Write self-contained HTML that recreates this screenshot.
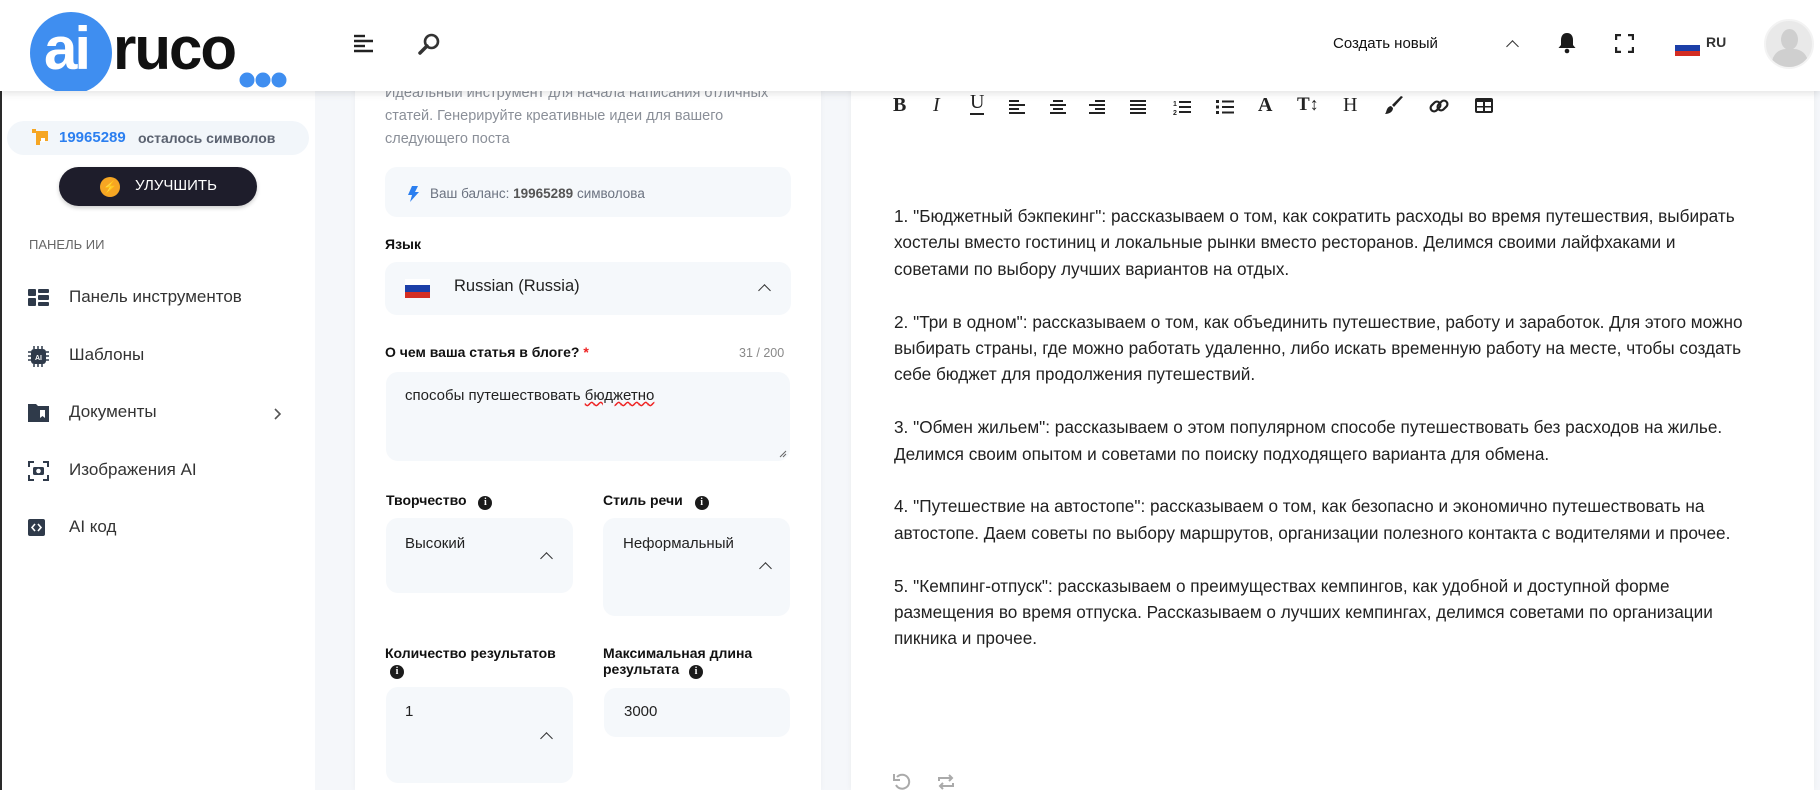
<!DOCTYPE html>
<html><head><meta charset="utf-8">
<style>
*{margin:0;padding:0;box-sizing:border-box}
body{width:1820px;height:790px;overflow:hidden;background:#f5f7fa;font-family:"Liberation Sans","Noto Sans CJK SC",sans-serif;color:#333;position:relative}
.abs{position:absolute}
.header{left:0;top:0;width:1820px;height:91px;background:#fff;box-shadow:0 2px 8px rgba(0,0,0,.12);z-index:5}
.sidebar{left:0;top:0;width:315px;height:790px;background:#fff;border-left:2px solid #2a2a2a}
.card{left:355px;top:0;width:466px;height:790px;background:#fff;box-shadow:0 0 6px rgba(0,0,0,.04)}
.right{left:851px;top:0;width:963px;height:790px;background:#fff;box-shadow:0 0 6px rgba(0,0,0,.05)}
.box{background:#f5f8fb;border-radius:12px}
.lbl{font-weight:bold;font-size:14px;color:#111}
.info{display:inline-block;width:14px;height:14px;border-radius:50%;background:#1b1b1b;color:#fff;font-size:10px;font-weight:bold;text-align:center;line-height:14px;font-family:"Liberation Serif",serif}
.chev{width:9px;height:9px;border-left:1.6px solid #333;border-top:1.6px solid #333;transform:rotate(45deg)}
.menu{font-size:17px;color:#333}
.txt p{font-size:17.2px;line-height:26.4px;color:#222;margin-bottom:26.4px;white-space:nowrap}
.tb{top:95px;width:22px;height:22px}
</style></head><body>

<div class="abs sidebar"></div>
<div class="abs card"></div>
<div class="abs right"></div>

<div class="abs header">
  <svg class="abs" style="left:0;top:0" width="300" height="91">
    <circle cx="71" cy="53" r="41" fill="#3f8ef0"/>
    <text x="44" y="69" font-family="Liberation Sans" font-weight="bold" font-size="60" fill="#fff" letter-spacing="-3">ai</text>
    <text x="113" y="69" font-family="Liberation Sans" font-weight="bold" font-size="60" fill="#111" letter-spacing="-2">ruco</text>
    <circle cx="247" cy="80" r="7.5" fill="#3f8ef0"/>
    <circle cx="263" cy="80" r="7.5" fill="#3f8ef0"/>
    <circle cx="279" cy="80" r="7.5" fill="#3f8ef0"/>
  </svg>
  <svg class="abs" style="left:354px;top:34px" width="20" height="19"><g stroke="#222" stroke-width="2.4"><line x1="0" y1="2" x2="11" y2="2"/><line x1="0" y1="7" x2="19" y2="7"/><line x1="0" y1="12" x2="11" y2="12"/><line x1="0" y1="17" x2="19" y2="17"/></g></svg>
  <svg class="abs" style="left:417px;top:32px" width="24" height="24"><circle cx="14.5" cy="9.5" r="6.5" fill="none" stroke="#333" stroke-width="2.6"/><line x1="10" y1="14" x2="3" y2="21" stroke="#333" stroke-width="3.5" stroke-linecap="round"/></svg>
  <div class="abs" style="left:1333px;top:35px;font-size:15px;color:#111">Создать новый</div>
  <div class="abs chev" style="left:1508px;top:42px"></div>
  <svg class="abs" style="left:1557px;top:32px" width="20" height="22"><path d="M10 1c-4 0-6 3-6 7v5l-2.5 3h17L16 13V8c0-4-2-7-6-7z" fill="#1b1b1b"/><circle cx="10" cy="19" r="2.3" fill="#1b1b1b"/></svg>
  <svg class="abs" style="left:1615px;top:34px" width="19" height="19"><g fill="none" stroke="#222" stroke-width="2.4"><path d="M1 6V1h5M13 1h5v5M18 13v5h-5M6 18H1v-5"/></g></svg>
  <div class="abs" style="left:1675px;top:40px;width:25px;height:16px">
    <div style="height:5px;background:#fff"></div><div style="height:5.5px;background:#1c3fa8"></div><div style="height:5.5px;background:#d42d22"></div>
  </div>
  <div class="abs" style="left:1706px;top:34px;font-size:14px;font-weight:bold;color:#333">RU</div>
  <div class="abs" style="left:1764px;top:19px;width:50px;height:50px;border-radius:50%;background:#e9e9e9;border:2px solid #f3f3f3;overflow:hidden">
    <div class="abs" style="left:15px;top:8px;width:17px;height:21px;border-radius:50%;background:#cfcfcf"></div>
    <div class="abs" style="left:6px;top:28px;width:36px;height:30px;border-radius:14px 14px 0 0;background:#cfcfcf"></div>
  </div>
</div>

<div class="abs box" style="left:7px;top:121px;width:302px;height:34px;border-radius:17px;background:#f2f6fa"></div>
<svg class="abs" style="left:32px;top:129px" width="18" height="18"><rect x="0" y="0" width="4" height="4" fill="#f6a623"/><path d="M4 2h12v10h-8v4H4z" fill="#f6a623"/><rect x="9" y="9" width="4" height="4" fill="#fff"/></svg>
<div class="abs" style="left:59px;top:129px;font-size:15px;font-weight:bold;color:#2b7ff0">19965289</div>
<div class="abs" style="left:138px;top:130px;font-size:14px;font-weight:bold;color:#5b6270">осталось символов</div>
<div class="abs" style="left:59px;top:167px;width:198px;height:39px;border-radius:20px;background:#1e1d2b;box-shadow:0 2px 4px rgba(0,0,0,.2)"></div>
<div class="abs" style="left:100px;top:177px;width:20px;height:20px;border-radius:50%;background:#f6a623;color:#1e1d2b;font-size:12px;text-align:center;line-height:20px">⚡</div>
<div class="abs" style="left:135px;top:177px;font-size:15px;color:#fff">УЛУЧШИТЬ</div>
<div class="abs" style="left:29px;top:237px;font-size:13px;color:#666">ПАНЕЛЬ ИИ</div>

<svg class="abs" style="left:28px;top:289px" width="21" height="17"><g fill="#2f3a4a"><rect x="0" y="0" width="8" height="7" rx="1"/><rect x="0" y="9" width="8" height="8" rx="1"/><rect x="10" y="0" width="11" height="4" rx="1"/><rect x="10" y="6" width="11" height="5" rx="1"/><rect x="10" y="13" width="11" height="4" rx="1"/></g></svg>
<div class="abs menu" style="left:69px;top:287px">Панель инструментов</div>
<svg class="abs" style="left:28px;top:346px" width="21" height="21"><g stroke="#2f3a4a" stroke-width="1.5"><path d="M6 0v3M10 0v3M14 0v3M6 18v3M10 18v3M14 18v3M0 6h3M0 10h3M0 14h3M18 6h3M18 10h3M18 14h3"/></g><rect x="3" y="3" width="15" height="15" rx="3" fill="#2f3a4a"/><text x="10.5" y="14" font-size="7" font-weight="bold" fill="#fff" text-anchor="middle" font-family="Liberation Sans">AI</text></svg>
<div class="abs menu" style="left:69px;top:345px">Шаблоны</div>
<svg class="abs" style="left:28px;top:404px" width="21" height="18"><path d="M0 0h8l2 2h11v16H0z" fill="#2f3a4a"/><path d="M12 6h5v8l-2.5-2-2.5 2z" fill="#fff"/></svg>
<div class="abs menu" style="left:69px;top:402px">Документы</div>
<svg class="abs" style="left:274px;top:408px" width="8" height="12"><path d="M1 1l5 5-5 5" fill="none" stroke="#555" stroke-width="1.6"/></svg>
<svg class="abs" style="left:28px;top:461px" width="21" height="20"><g fill="none" stroke="#2f3a4a" stroke-width="2"><path d="M1 6V1h5M15 1h5v5M20 14v5h-5M6 19H1v-5"/></g><rect x="5" y="6" width="11" height="8" rx="1.5" fill="#2f3a4a"/><circle cx="10.5" cy="10" r="2.3" fill="#fff"/></svg>
<div class="abs menu" style="left:69px;top:460px">Изображения AI</div>
<svg class="abs" style="left:28px;top:519px" width="17" height="17"><rect width="17" height="17" rx="2" fill="#2f3a4a"/><path d="M7 5l-3 3.5 3 3.5M10 5l3 3.5-3 3.5" fill="none" stroke="#fff" stroke-width="1.6"/></svg>
<div class="abs menu" style="left:69px;top:517px">AI код</div>

<div class="abs" style="left:385px;top:82px;font-size:14.5px;line-height:23px;color:#8a8f98;width:410px">Идеальный инструмент для начала написания отличных статей. Генерируйте креативные идеи для вашего следующего поста</div>
<div class="abs box" style="left:385px;top:167px;width:406px;height:50px"></div>
<svg class="abs" style="left:408px;top:186px" width="11" height="16"><path d="M4 0h6L7 6h4L2 16l2-7H0z" fill="#2b7ff0"/></svg>
<div class="abs" style="left:430px;top:186px;font-size:13.5px;color:#6b7280">Ваш баланс: <b style="color:#555">19965289</b> символова</div>
<div class="abs lbl" style="left:385px;top:236px">Язык</div>
<div class="abs box" style="left:385px;top:262px;width:406px;height:53px"></div>
<div class="abs" style="left:405px;top:279px;width:25px;height:19px">
  <div style="height:6px;background:#fff"></div><div style="height:6.5px;background:#1c3fa8"></div><div style="height:6.5px;background:#d42d22"></div>
</div>
<div class="abs" style="left:454px;top:277px;font-size:16.5px;color:#222">Russian (Russia)</div>
<div class="abs chev" style="left:760px;top:286px"></div>

<div class="abs lbl" style="left:385px;top:344px">О чем ваша статья в блоге? <span style="color:#e22">*</span></div>
<div class="abs" style="left:739px;top:346px;font-size:12.5px;color:#888">31 / 200</div>
<div class="abs box" style="left:386px;top:372px;width:404px;height:89px"></div>
<div class="abs" style="left:405px;top:387px;font-size:15px;color:#222">способы путешествовать <span style="text-decoration:underline wavy #e22">бюджетно</span></div>
<svg class="abs" style="left:779px;top:450px" width="8" height="8"><path d="M1 7l6-6M4 7l3-3" stroke="#666" stroke-width="1"/></svg>

<div class="abs lbl" style="left:386px;top:492px">Творчество <span class="info" style="margin-left:8px">i</span></div>
<div class="abs lbl" style="left:603px;top:492px">Стиль речи <span class="info" style="margin-left:8px">i</span></div>
<div class="abs box" style="left:386px;top:518px;width:187px;height:75px"></div>
<div class="abs" style="left:405px;top:535px;font-size:15px;color:#222">Высокий</div>
<div class="abs chev" style="left:542px;top:554px"></div>
<div class="abs box" style="left:603px;top:518px;width:187px;height:98px"></div>
<div class="abs" style="left:623px;top:535px;font-size:15px;color:#222">Неформальный</div>
<div class="abs chev" style="left:761px;top:564px"></div>

<div class="abs lbl" style="left:385px;top:645px;line-height:16px">Количество результатов<br><span class="info" style="margin-left:5px">i</span></div>
<div class="abs lbl" style="left:603px;top:645px;line-height:16px">Максимальная длина<br>результата <span class="info" style="margin-left:6px">i</span></div>
<div class="abs box" style="left:386px;top:687px;width:187px;height:96px"></div>
<div class="abs" style="left:405px;top:703px;font-size:15px;color:#222">1</div>
<div class="abs chev" style="left:542px;top:734px"></div>
<div class="abs box" style="left:604px;top:688px;width:186px;height:49px"></div>
<div class="abs" style="left:624px;top:703px;font-size:15px;color:#222">3000</div>

<div class="abs" style="left:893px;top:94px;font-family:'Liberation Serif',serif;font-size:20px;font-weight:bold;color:#222">B</div>
<div class="abs" style="left:933px;top:94px;font-family:'Liberation Serif',serif;font-size:20px;font-style:italic;color:#222">I</div>
<div class="abs" style="left:970px;top:92px;font-family:'Liberation Serif',serif;font-size:20px;color:#222;border-bottom:2px solid #222;line-height:20px;padding-bottom:1px">U</div>
<svg class="abs tb" style="left:1009px" width="16" height="22"><g stroke="#222" stroke-width="2"><path d="M0 6h10M0 10h16M0 14h10M0 18h16"/></g></svg>
<svg class="abs tb" style="left:1050px" width="16" height="22"><g stroke="#222" stroke-width="2"><path d="M3 6h10M0 10h16M3 14h10M0 18h16"/></g></svg>
<svg class="abs tb" style="left:1089px" width="16" height="22"><g stroke="#222" stroke-width="2"><path d="M6 6h10M0 10h16M6 14h10M0 18h16"/></g></svg>
<svg class="abs tb" style="left:1130px" width="16" height="22"><g stroke="#222" stroke-width="2"><path d="M0 6h16M0 10h16M0 14h16M0 18h16"/></g></svg>
<svg class="abs tb" style="left:1173px" width="18" height="22"><text x="0" y="11" font-size="7" font-family="Liberation Sans" font-weight="bold" fill="#222">1</text><text x="0" y="20" font-size="7" font-family="Liberation Sans" font-weight="bold" fill="#222">2</text><g stroke="#222" stroke-width="2"><path d="M6 7h12M6 12h12M6 17h12"/></g></svg>
<svg class="abs tb" style="left:1216px" width="18" height="22"><g fill="#222"><rect x="0" y="5" width="3" height="3"/><rect x="0" y="10.5" width="3" height="3"/><rect x="0" y="16" width="3" height="3"/></g><g stroke="#222" stroke-width="2"><path d="M6 6.5h12M6 12h12M6 17.5h12"/></g></svg>
<div class="abs" style="left:1258px;top:94px;font-family:'Liberation Serif',serif;font-size:20px;font-weight:bold;color:#222">A</div>
<div class="abs" style="left:1297px;top:94px;font-family:'Liberation Serif',serif;font-size:19px;font-weight:bold;color:#222">T<span style="font-size:18px">↕</span></div>
<div class="abs" style="left:1343px;top:94px;font-family:'Liberation Serif',serif;font-size:20px;color:#222">H</div>
<svg class="abs tb" style="left:1384px" width="20" height="22"><path d="M19 2L10 12l-2-2L17 1z" fill="#222"/><path d="M7 11l2 2c0 4-4 6-8 6 2-2 1-7 6-8z" fill="#222"/></svg>
<svg class="abs tb" style="left:1428px" width="22" height="22"><g fill="none" stroke="#222" stroke-width="2.2"><rect x="2" y="8" width="11" height="7" rx="3.5" transform="rotate(-45 7.5 11.5)"/><rect x="9" y="7" width="11" height="7" rx="3.5" transform="rotate(-45 14.5 10.5)"/></g></svg>
<svg class="abs tb" style="left:1475px" width="20" height="20"><rect x="0" y="3" width="18" height="15" rx="2" fill="#222"/><g fill="#fff"><rect x="2" y="7" width="6" height="4"/><rect x="10" y="7" width="6" height="4"/><rect x="2" y="12.5" width="6" height="3.5"/><rect x="10" y="12.5" width="6" height="3.5"/></g></svg>

<div class="abs txt" style="left:894px;top:203px;width:910px">
<p>1. "Бюджетный бэкпекинг": рассказываем о том, как сократить расходы во время путешествия, выбирать<br>хостелы вместо гостиниц и локальные рынки вместо ресторанов. Делимся своими лайфхаками и<br>советами по выбору лучших вариантов на отдых.</p>
<p>2. "Три в одном": рассказываем о том, как объединить путешествие, работу и заработок. Для этого можно<br>выбирать страны, где можно работать удаленно, либо искать временную работу на месте, чтобы создать<br>себе бюджет для продолжения путешествий.</p>
<p>3. "Обмен жильем": рассказываем о этом популярном способе путешествовать без расходов на жилье.<br>Делимся своим опытом и советами по поиску подходящего варианта для обмена.</p>
<p>4. "Путешествие на автостопе": рассказываем о том, как безопасно и экономично путешествовать на<br>автостопе. Даем советы по выбору маршрутов, организации полезного контакта с водителями и прочее.</p>
<p>5. "Кемпинг-отпуск": рассказываем о преимуществах кемпингов, как удобной и доступной форме<br>размещения во время отпуска. Рассказываем о лучших кемпингах, делимся советами по организации<br>пикника и прочее.</p>
</div>

<svg class="abs" style="left:893px;top:773px" width="18" height="17"><path d="M4 4a7 7 0 1 1 -1 8" fill="none" stroke="#aaa" stroke-width="2"/><path d="M1 1v6h6" fill="none" stroke="#aaa" stroke-width="2"/></svg>
<svg class="abs" style="left:937px;top:773px" width="18" height="17"><g fill="none" stroke="#aaa" stroke-width="2"><path d="M2 8V5h13M12 2l3 3-3 3M16 10v3H3M6 16l-3-3 3-3"/></g></svg>
</body></html>
